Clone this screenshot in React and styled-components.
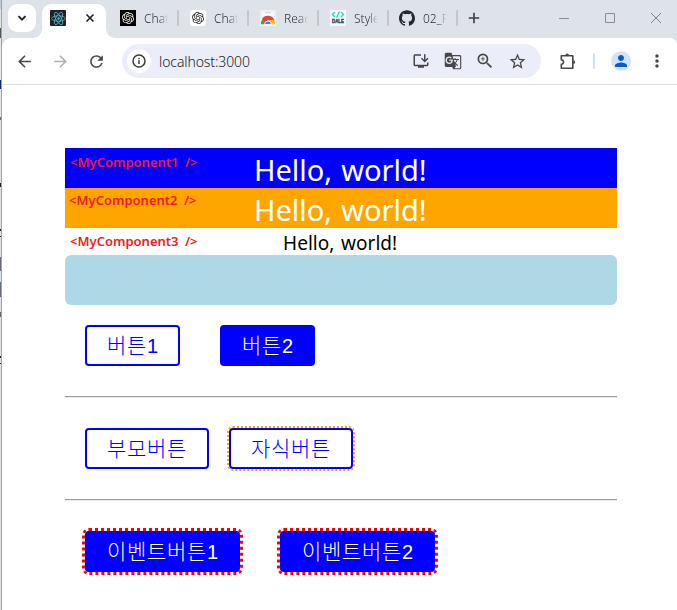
import React from "react";
import styled, { createGlobalStyle, css } from "styled-components";
import {
  MdArrowBack,
  MdArrowForward,
  MdRefresh,
  MdInstallDesktop,
  MdGTranslate,
  MdZoomIn,
  MdStarOutline,
  MdPerson,
  MdMoreVert,
} from "react-icons/md";
import { SiOpenai, SiGithub } from "react-icons/si";

const GlobalStyle = createGlobalStyle`
  *, *::before, *::after { box-sizing: border-box; }
  body { margin: 0; background: #fff; overflow: hidden; }
`;

const Screen = styled.div`
  display: flex;
  width: 677px;
  height: 610px;
  overflow: hidden;
  font-family: "Noto Sans", "Noto Sans CJK KR", sans-serif;
`;

/* Sliver of the window that lies behind the browser */
const BackWindow = styled.div`
  flex: none;
  width: 2px;
  height: 610px;
  border-right: 1px solid #a3a3a3;
  background: linear-gradient(
    #c4cbd5 0 9px, #e2e2e2 9px 28px, #555 28px 38px, #e8e8e8 38px 80px,
    #0c2a6b 80px 89px, #e6e6e6 89px 117px, #6b6f7a 117px 120px,
    #e0e0e0 120px 183px, #222 183px 187px, #e0e0e0 187px 229px,
    #222 229px 231px, #e0e0e0 231px 236px, #222 236px 237px,
    #e0e0e0 237px 257px, #666a7a 257px 271px, #d0e6e2 271px 282px,
    #666a7a 282px 297px, #e0e0e0 297px 312px, #666 312px 317px,
    #e0e0e0 317px 356px, #222 356px 358px, #e0e0e0 358px 363px,
    #222 363px 364px, #e0e0e0 364px
  );
`;

const Browser = styled.div`
  flex: 1;
  display: flex;
  flex-direction: column;
  background: #dee2e9;
`;

const TabStrip = styled.div`
  flex: none;
  display: flex;
  height: 38px;
  padding: 4px 0 0 6px;
`;

const TabSearch = styled.div`
  display: grid;
  place-items: center;
  width: 28px;
  height: 28px;
  border-radius: 9px;
  background: #fff;
`;

const ActiveTab = styled.div`
  position: relative;
  display: flex;
  align-items: center;
  gap: 19px;
  width: 64px;
  height: 34px;
  margin: 0 14px 0 6px;
  padding: 0 0 6px 8px;
  border-radius: 9px 9px 0 0;
  background: #fff;

  &::before, &::after {
    content: "";
    position: absolute;
    bottom: 0;
    width: 9px;
    height: 9px;
  }
  &::before {
    left: -9px;
    background: radial-gradient(circle at 0 0, transparent 8.5px, #fff 9px);
  }
  &::after {
    right: -9px;
    background: radial-gradient(circle at 100% 0, transparent 8.5px, #fff 9px);
  }
`;

const Tab = styled.div`
  display: flex;
  align-items: center;
  width: ${(p) => p.$width || 70}px;
  height: 28px;
`;

const Favicon = styled.span`
  flex: none;
  display: grid;
  place-items: center;
  width: 16px;
  height: 16px;
  border-radius: ${(p) => p.$radius || 0}px;
  background: ${(p) => p.$bg || "transparent"};
  color: ${(p) => p.$color || "#24292f"};
  svg { display: block; }
`;

const TabTitle = styled.span`
  width: 24px;
  margin-left: 8px;
  overflow: hidden;
  white-space: nowrap;
  font-size: 12px;
  font-weight: 300;
  line-height: 20px;
  letter-spacing: 0;
  padding-top: 2px;
  color: #2c2e32;
  mask-image: linear-gradient(90deg, #000 60%, transparent 100%);
`;

const TabDivider = styled.span`
  width: 2px;
  height: 16px;
  margin-left: 9px;
  border-radius: 1px;
  background: #c6c6c8;
`;

const NewTab = styled.div`
  display: flex;
  align-items: center;
  width: 12px;
  height: 28px;
  margin-left: -1px;
`;

const WindowControls = styled.div`
  display: flex;
  gap: 34px;
  align-items: center;
  height: 28px;
  margin-left: auto;
  margin-right: 15px;
  svg { display: block; }
`;

const Toolbar = styled.div`
  flex: none;
  display: flex;
  align-items: center;
  height: 47px;
  padding: 0 11px 0 13px;
  border-bottom: 1px solid #dedede;
  border-radius: 9px 7px 0 0;
  background: #fff;
`;

const ToolIcon = styled.span`
  flex: none;
  display: flex;
  align-items: center;
  justify-content: center;
  width: 18px;
  height: 18px;
  margin-left: ${(p) => p.$gap || 0}px;
  color: ${(p) => p.$color || "#474747"};
  svg { flex: none; display: block; }
`;

const AddressBar = styled.div`
  display: flex;
  align-items: center;
  width: 419px;
  height: 34px;
  margin-left: 17px;
  padding: 0 15px 0 5px;
  border-radius: 17px;
  background: #ebeef8;
`;

const SiteInfo = styled.span`
  display: grid;
  place-items: center;
  width: 24px;
  height: 24px;
  border-radius: 50%;
  background: #fff;
`;

const Url = styled.span`
  flex: 1;
  margin-left: 8px;
  font-size: 14px;
  font-weight: 300;
  letter-spacing: -0.1px;
  color: #222226;
`;

const ToolDivider = styled.span`
  width: 2px;
  height: 16px;
  margin-left: 16px;
  border-radius: 1px;
  background: #cfe0fb;
`;

const Avatar = styled.span`
  display: grid;
  place-items: center;
  width: 20px;
  height: 20px;
  margin-left: 16px;
  border-radius: 50%;
  background: #d3e3fd;
  color: #0b57d0;
`;

const Page = styled.main`
  flex: 1;
  padding: 63px 60px 0 63px;
  background: #fff;
`;

const Greeting = styled.div`
  position: relative;
  height: ${(p) => (p.$small ? 27 : 40)}px;
  padding-left: ${(p) => (p.$small ? 218 : 189)}px;
  background: ${(p) => p.$bg};
  color: ${(p) => (p.$small ? "#000" : "#fff")};
  font-size: ${(p) => (p.$small ? 19 : 29)}px;
  font-weight: 400;
  line-height: ${(p) => (p.$small ? 31 : 43)}px;
  letter-spacing: ${(p) => (p.$small ? 0.05 : 0)}px;
  word-spacing: 1.5px;
  white-space: nowrap;
`;

const Note = styled.span`
  position: absolute;
  left: ${(p) => p.$left}px;
  top: ${(p) => p.$top}px;
  color: #ed1c24;
  font-size: 13px;
  font-weight: 600;
  line-height: 18px;
  letter-spacing: 0;
  word-spacing: 3px;
`;

const Box = styled.div`
  height: 50px;
  border-radius: 6px;
  background: lightblue;
`;

const ButtonRow = styled.div`
  display: flex;
  gap: ${(p) => p.$gap}px;
  padding: ${(p) => p.$top}px 20px 30px;
`;

const Button = styled.button`
  width: ${(p) => p.$width}px;
  height: 41px;
  padding: 1px 0 0;
  border: 2px solid blue;
  border-radius: 4px;
  background: ${(p) => (p.$filled ? "blue" : "#fff")};
  color: ${(p) => (p.$filled ? "#fff" : "blue")};
  font-family: "Liberation Sans", "Noto Sans CJK KR", sans-serif;
  font-size: 20px;
  font-weight: 300;
  line-height: 34px;
  white-space: nowrap;
  ${(p) => p.$ring && css`outline: ${p.$ring};`}
`;

const Hangul = styled.span`
  letter-spacing: 0.7px;
  font-size: 21px;
`;

const Rule = styled.hr`
  height: 2px;
  margin: 0;
  border: 0;
  border-top: 1px solid #9a9a9a;
  border-bottom: 1px solid #eee;
`;

const ReactLogo = () => (
  <svg width="15" height="15" viewBox="-12 -12 24 24" fill="none" stroke="#53b9d8" strokeWidth="1.3">
    <circle r="2" fill="#53b9d8" stroke="none" />
    <ellipse rx="11" ry="4.3" />
    <ellipse rx="11" ry="4.3" transform="rotate(60)" />
    <ellipse rx="11" ry="4.3" transform="rotate(120)" />
  </svg>
);

const ChromeStoreLogo = () => (
  <svg width="16" height="16" viewBox="0 0 16 16">
    <path d="M1 1h14v13H1z" fill="#f8f9fa" stroke="#e3e5e8" strokeWidth=".7" />
    <path d="M5 2h6v1.200H5z" fill="#d5d8dc" />
    <path d="M1 14.500a7 7 0 0 1 1.600-5.500L6 14.500z" fill="#34a853" />
    <path d="M2 9a7 7 0 0 1 12.500 1.200H8L5 13.500z" fill="#ea4335" />
    <path d="M14.500 10.200a7 7 0 0 1 .5 4.300h-5l-1-4.300z" fill="#fbbc04" />
    <path d="M4.500 14.500a3.500 3.500 0 0 1 7 0z" fill="#4285f4" stroke="#fff" strokeWidth=".8" />
    <path d="M0 14.600h16V16H0z" fill="#f3f4f6" />
  </svg>
);

const DaleLogo = () => (
  <svg width="16" height="16" viewBox="0 0 16 16">
    <path d="M5 2 2.500 4.500 5 7M11 2l2.500 2.500L11 7M9.500 1.500 6.500 7.500" fill="none" stroke="#1fd8bd" strokeWidth="1.400" />
    <text x="2" y="13.300" fontFamily="Liberation Sans" fontWeight="700" fontSize="5.200" textLength="12" lengthAdjust="spacingAndGlyphs" fill="#26344b" stroke="#26344b" strokeWidth=".3">DALE</text>
  </svg>
);

const PuzzleIcon = () => (
  <svg width="18" height="18" viewBox="0 0 18 18" fill="none" stroke="#474747" strokeWidth="1.600" strokeLinejoin="round">
    <path d="M2.300 3.800h11.500v12.500H2.300v-4c3-.4 3-4.100 0-4.500z" />
    <path d="M6.300 3.500a1.900 1.900 0 0 1 3.800 0zM14.300 8.200a1.900 1.900 0 0 1 0 3.800z" fill="#474747" stroke="none" />
  </svg>
);

const tabs = [
  { title: "ChatGPT", bg: "#000", color: "#fff", icon: <SiOpenai size={12} /> },
  { title: "ChatGPT", bg: "#fff", color: "#222", radius: 3, icon: <SiOpenai size={12} /> },
  { title: "React", bg: "#f3f4f6", icon: <ChromeStoreLogo /> },
  { title: "Styled", bg: "#f5f8fa", icon: <DaleLogo />, width: 69 },
  { title: "02_Front", icon: <SiGithub size={16} /> },
];

export default function App() {
  return (
    <>
      <GlobalStyle />
      <Screen>
        <BackWindow />
        <Browser>
          <TabStrip>
            <TabSearch>
              <svg width="10" height="10" viewBox="0 0 10 10" fill="none" stroke="#1f1f1f" strokeWidth="1.8">
                <path d="M1.500 3.200 5 6.700l3.500-3.500" />
              </svg>
            </TabSearch>
            <ActiveTab>
              <Favicon $bg="#222" $radius={1}><ReactLogo /></Favicon>
              <svg width="10" height="10" viewBox="0 0 10 10" stroke="#1f1f1f" strokeWidth="1.600">
                <path d="m1.500 1.500 7 7m0-7-7 7" />
              </svg>
            </ActiveTab>
            {tabs.map((tab, i) => (
              <Tab key={i} $width={tab.width}>
                <Favicon $bg={tab.bg} $color={tab.color} $radius={tab.radius}>{tab.icon}</Favicon>
                <TabTitle>{tab.title}</TabTitle>
                <TabDivider />
              </Tab>
            ))}
            <NewTab>
              <svg width="12" height="12" viewBox="0 0 12 12" stroke="#3c3c3c" strokeWidth="1.600">
                <path d="M6 .8v10.400M.8 6h10.400" />
              </svg>
            </NewTab>
            <WindowControls>
              <svg width="12" height="12" viewBox="0 0 12 12" stroke="#8b8d91"><path d="M1 6.500h10" /></svg>
              <svg width="12" height="12" viewBox="0 0 12 12" stroke="#8b8d91" fill="none"><path d="M1.500 1.500h9v9h-9z" /></svg>
              <svg width="12" height="12" viewBox="0 0 12 12" stroke="#808286"><path d="m1 1 10 10M11 1 1 11" /></svg>
            </WindowControls>
          </TabStrip>
          <Toolbar>
            <ToolIcon><MdArrowBack size={19} /></ToolIcon>
            <ToolIcon $gap={18} $color="#b0b0b0"><MdArrowForward size={19} /></ToolIcon>
            <ToolIcon $gap={18}><MdRefresh size={19} /></ToolIcon>
            <AddressBar>
              <SiteInfo>
                <svg width="14" height="14" viewBox="0 0 14 14" fill="none" stroke="#3c3c3c" strokeWidth="1.500">
                  <circle cx="7" cy="7" r="6" />
                  <path d="M7 6.300V10M7 3.700v1.500" />
                </svg>
              </SiteInfo>
              <Url>localhost:3000</Url>
              <ToolIcon><MdInstallDesktop size={18} /></ToolIcon>
              <ToolIcon $gap={14}><MdGTranslate size={18} /></ToolIcon>
              <ToolIcon $gap={14}><MdZoomIn size={20} /></ToolIcon>
              <ToolIcon $gap={14}><MdStarOutline size={19} /></ToolIcon>
            </AddressBar>
            <ToolIcon $gap={18}><PuzzleIcon /></ToolIcon>
            <ToolDivider />
            <Avatar><MdPerson size={18} /></Avatar>
            <ToolIcon $gap={17}><MdMoreVert size={20} /></ToolIcon>
          </Toolbar>
          <Page>
            <Greeting $bg="blue">
              <Note $left={5} $top={5}>&lt;MyComponent1 /&gt;</Note>
              Hello, world!
            </Greeting>
            <Greeting $bg="orange">
              <Note $left={4} $top={3}>&lt;MyComponent2 /&gt;</Note>
              Hello, world!
            </Greeting>
            <Greeting $bg="#fff" $small>
              <Note $left={5} $top={4}>&lt;MyComponent3 /&gt;</Note>
              Hello, world!
            </Greeting>
            <Box />
            <ButtonRow $top={20} $gap={40}>
              <Button $width={95}><Hangul>버튼</Hangul>1</Button>
              <Button $width={95} $filled><Hangul>버튼</Hangul>2</Button>
            </ButtonRow>
            <Rule />
            <ButtonRow $top={30} $gap={20}>
              <Button $width={124}><Hangul>부모버튼</Hangul></Button>
              <Button $width={124} $ring="2px dotted orange"><Hangul>자식버튼</Hangul></Button>
            </ButtonRow>
            <Rule />
            <ButtonRow $top={30} $gap={40}>
              <Button $width={155} $filled $ring="3px dotted red"><Hangul>이벤트버튼</Hangul>1</Button>
              <Button $width={155} $filled $ring="3px dotted red"><Hangul>이벤트버튼</Hangul>2</Button>
            </ButtonRow>
          </Page>
        </Browser>
      </Screen>
    </>
  );
}
